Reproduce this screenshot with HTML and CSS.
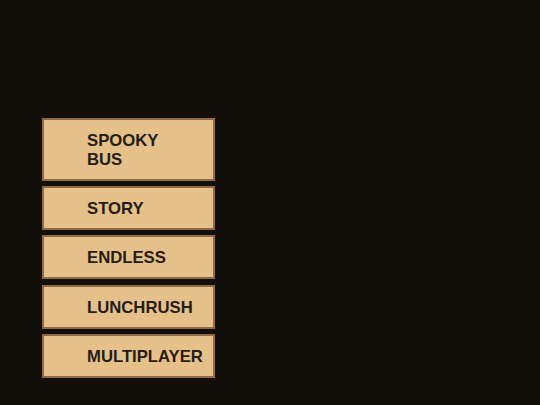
FILE: index.html
```html
<!DOCTYPE html>
<html>
<head>
<meta charset="utf-8">
<link rel="stylesheet" href="styles.css">
</head>
<body>
<div class="menu">
  <div class="btn">SPOOKY<br>BUS</div>
  <div class="btn">STORY</div>
  <div class="btn">ENDLESS</div>
  <div class="btn">LUNCHRUSH</div>
  <div class="btn">MULTIPLAYER</div>
</div>
</body>
</html>
```
FILE: styles.css
```css
html, body {
  margin: 0;
  padding: 0;
  width: 540px;
  height: 405px;
  background: #120f0a;
  overflow: hidden;
}
.menu {
  display: flex;
  flex-direction: column;
  gap: 5.2px;
  padding-top: 118px;
  padding-left: 42px;
  width: 173px;
}
.btn {
  box-sizing: border-box;
  width: 173px;
  background: #e6c089;
  border: 2px solid #8e6a45;
  padding: 11px 0 10px 43px;
  font-family: "Liberation Sans", Arial, sans-serif;
  font-weight: bold;
  font-size: 16.7px;
  line-height: 19px;
  color: #261d14;
}
```
